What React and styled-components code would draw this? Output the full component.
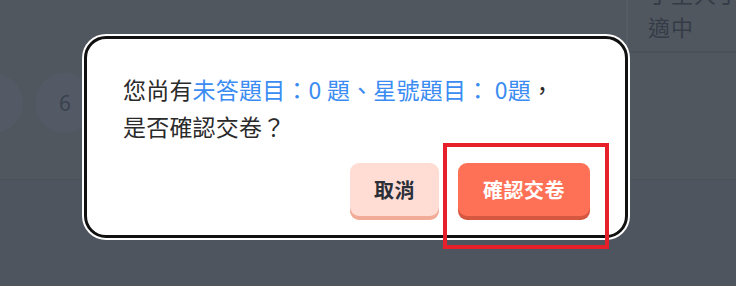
import React from 'react';
import styled, { createGlobalStyle } from 'styled-components';

const GlobalStyle = createGlobalStyle`
  html, body {
    margin: 0;
    padding: 0;
    background: #4e555f;
  }
  * {
    box-sizing: border-box;
  }
`;

const App = () => {
  return (
    <Page>
      <GlobalStyle />

      <Behind>
        <Panel>
          <CircleRow>
            <NumCircle />
            <NumCircle>6</NumCircle>
          </CircleRow>
          <LevelCard>
            <LevelText>丁主人丁</LevelText>
            <LevelText>適中</LevelText>
          </LevelCard>
        </Panel>
      </Behind>

      <Dialog>
        <Message>
          您尚有<Blue>未答題目：0 題、星號題目： 0題</Blue>，
          <br />
          是否確認交卷？
        </Message>
        <Actions>
          <CancelButton>取消</CancelButton>
          <ConfirmButton>確認交卷</ConfirmButton>
        </Actions>
      </Dialog>

      <Highlight />
    </Page>
  );
};

export default App;

const Page = styled.div`
  position: relative;
  width: 736px;
  height: 286px;
  overflow: hidden;
  background: #4e555f;
  font-family: 'Noto Sans CJK TC', 'Noto Sans', sans-serif;
`;

const Behind = styled.div`
  display: flex;
  flex-direction: column;
  height: 100%;
`;

const Panel = styled.div`
  display: flex;
  justify-content: space-between;
  align-items: flex-start;
  height: 180px;
  background: #50575f;
  border-bottom: 1px solid #4b525b;
`;

const CircleRow = styled.div`
  display: flex;
  gap: 12px;
  margin-top: 73px;
  margin-left: -37px;
`;

const NumCircle = styled.div`
  display: flex;
  align-items: center;
  justify-content: center;
  width: 60px;
  height: 60px;
  border-radius: 50%;
  background: #535a65;
  color: #3a424e;
  font-family: 'Noto Sans', sans-serif;
  font-size: 21px;
`;

const LevelCard = styled.div`
  display: flex;
  flex-direction: column;
  width: 110px;
  height: 53px;
  padding: 0 0 0 20px;
  border-left: 2px solid #555c66;
  border-bottom: 2px solid #4a515a;
  background: #50575f;
  overflow: hidden;
`;

const LevelText = styled.span`
  color: #353c47;
  font-size: 22px;
  line-height: 30px;
  letter-spacing: 1px;
  white-space: nowrap;
  &:first-child {
    margin-top: -22px;
  }
  &:last-child {
    margin-top: 3px;
  }
`;

const Dialog = styled.div`
  position: absolute;
  left: 84px;
  top: 36px;
  width: 544px;
  height: 202px;
  display: flex;
  flex-direction: column;
  justify-content: space-between;
  padding: 32px 35px 15px 36px;
  background: #fff;
  border: 3px solid #111;
  border-radius: 22px;
  box-shadow: 0 0 0 2px #fff;
`;

const Message = styled.p`
  margin: 0;
  color: #2a2a2a;
  font-size: 23px;
  line-height: 37px;
  letter-spacing: 0.2px;
  white-space: nowrap;
`;

const Blue = styled.span`
  color: #3b8cf2;
`;

const Actions = styled.div`
  display: flex;
  justify-content: flex-end;
  gap: 19px;
`;

const BaseButton = styled.button`
  height: 53px;
  margin-bottom: 4px;
  border: none;
  border-radius: 9px;
  font-family: 'Noto Sans CJK TC', sans-serif;
  font-size: 20px;
  font-weight: 700;
  letter-spacing: 0.5px;
  cursor: pointer;
`;

const CancelButton = styled(BaseButton)`
  width: 89px;
  background: #ffddd4;
  color: #2a2f38;
  box-shadow: 0 4px 0 #f2ab97;
`;

const ConfirmButton = styled(BaseButton)`
  width: 132px;
  background: #ff7157;
  color: #fff;
  box-shadow: 0 4px 0 #d5573f;
`;

const Highlight = styled.div`
  position: absolute;
  left: 443px;
  top: 143px;
  width: 166px;
  height: 106px;
  border: 4px solid #e61f2a;
  pointer-events: none;
`;
